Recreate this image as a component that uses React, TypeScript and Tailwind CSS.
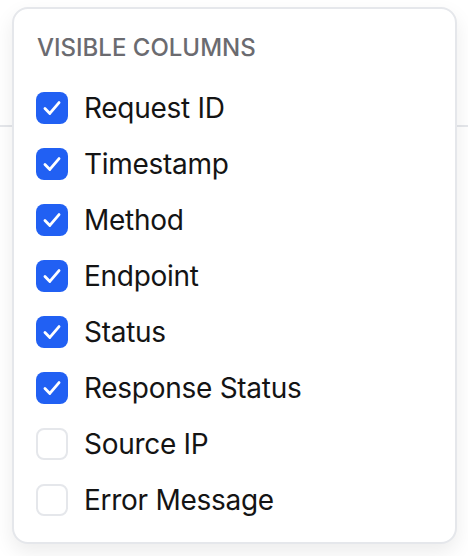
import { useState } from 'react';

const COLUMNS = [
  { id: 'requestId', label: 'Request ID', visible: true },
  { id: 'timestamp', label: 'Timestamp', visible: true },
  { id: 'method', label: 'Method', visible: true },
  { id: 'endpoint', label: 'Endpoint', visible: true },
  { id: 'status', label: 'Status', visible: true },
  { id: 'responseStatus', label: 'Response Status', visible: true },
  { id: 'sourceIp', label: 'Source IP', visible: false },
  { id: 'errorMessage', label: 'Error Message', visible: false },
];

export default function App() {
  const [columns, setColumns] = useState(COLUMNS);

  const toggle = (id: string) => {
    setColumns(cols => cols.map(c => (c.id === id ? { ...c, visible: !c.visible } : c)));
  };

  return (
    <div className="relative h-[556px] w-[468px] bg-white font-['Inter',sans-serif]">
      <div className="h-[127px] border-b-2 border-gray-200" />

      <div className="absolute left-[12px] top-[7px] w-[445px] rounded-[16px] border-2 border-gray-200 bg-white pt-[23px] pb-[14px] pl-[22px] pr-4 shadow-[0_8px_20px_rgba(0,0,0,0.08)]">
        <div className="h-[32px] pl-[1px] text-[24px] leading-[32px] font-medium uppercase text-[#6b6b70]">
          Visible Columns
        </div>
        <div className="mt-[16px] flex flex-col">
          {columns.map(col => (
            <label
              key={col.id}
              className="flex h-[56px] cursor-pointer items-center gap-[16px]"
              onClick={() => toggle(col.id)}
            >
              {col.visible ? (
                <span className="flex h-[32px] w-[32px] items-center justify-center rounded-[8px] bg-[#2160f3]">
                  <svg viewBox="0 0 24 24" className="h-[26px] w-[26px]" fill="none" stroke="white" strokeWidth={2.6} strokeLinecap="round" strokeLinejoin="round">
                    <path d="M5.5 12.5l4.5 4.5L18.5 7" />
                  </svg>
                </span>
              ) : (
                <span className="h-[32px] w-[32px] rounded-[8px] border-2 border-gray-200 bg-white" />
              )}
              <span className="text-[28px] leading-[36px] tracking-[-0.01em] text-[#141414]">{col.label}</span>
            </label>
          ))}
        </div>
      </div>
    </div>
  );
}
